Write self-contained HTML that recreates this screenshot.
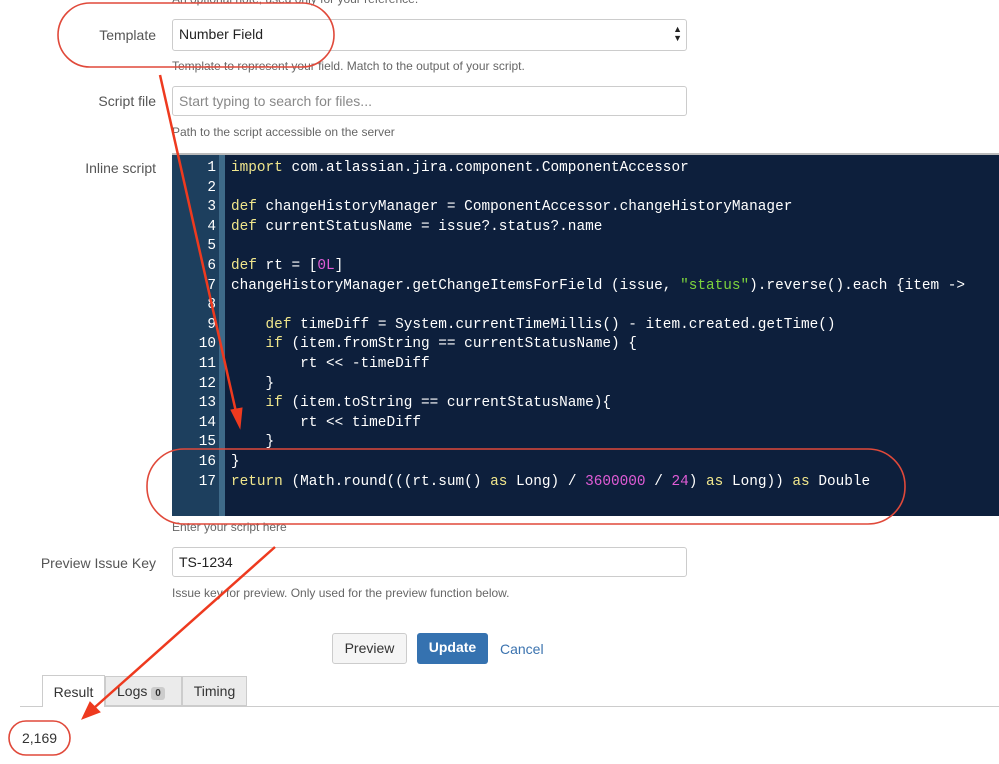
<!DOCTYPE html>
<html><head><style>
body{margin:0;width:999px;height:764px;overflow:hidden;background:#fff;font-family:"Liberation Sans",sans-serif;position:relative;color:#333}
.a{position:absolute}
.lbl{font-size:14px;color:#555;text-align:right;width:156px;left:0}
.inp{position:absolute;left:172px;width:515px;height:30px;border:1px solid #ccc;border-radius:3px;box-sizing:border-box;font-size:14px;padding:6px 6px;}
.help{position:absolute;left:172px;font-size:12px;color:#666}
.code{position:absolute;left:172px;top:153px;width:827px;height:363px;background:#0d1f3c;border-top:2px solid #bbb;box-sizing:border-box}
.gut{position:absolute;left:0;top:0;width:47px;height:100%;background:#1d3f5e}
.strip{position:absolute;left:47px;top:0;width:6px;height:100%;background:#3e6a89}
pre{margin:0;font-family:"Liberation Mono",monospace;font-size:14.4px;line-height:19.6px;position:absolute;top:4px}
.ln{left:0;width:44px;text-align:right;color:#fff}
.src{left:59px;color:#fff}
.k{color:#f0e68c}.n{color:#e05cd6}.s{color:#7cd33c}
.btn{position:absolute;top:633px;height:31px;border-radius:3px;font-size:14px;box-sizing:border-box;text-align:center;line-height:29px}
</style></head><body>
<div class="help" style="top:-8px">An optional note, used only for your reference.</div>
<div class="a lbl" style="top:27px">Template</div>
<div class="inp" style="top:19px;height:32px;background:#fff;color:#222">Number Field<span style="position:absolute;right:4px;top:5px;font-size:9px;line-height:9px">▲<br>▼</span></div>
<div class="help" style="top:59px">Template to represent your field. Match to the output of your script.</div>
<div class="a lbl" style="top:93px">Script file</div>
<div class="inp" style="top:86px;color:#888">Start typing to search for files...</div>
<div class="help" style="top:125px">Path to the script accessible on the server</div>
<div class="a lbl" style="top:160px">Inline script</div>
<div class="code"><div class="gut"></div><div class="strip"></div>
<pre class="ln">1
2
3
4
5
6
7
8
9
10
11
12
13
14
15
16
17</pre>
<pre class="src"><span class="k">import</span> com.atlassian.jira.component.ComponentAccessor

<span class="k">def</span> changeHistoryManager = ComponentAccessor.changeHistoryManager
<span class="k">def</span> currentStatusName = issue?.status?.name

<span class="k">def</span> rt = [<span class="n">0L</span>]
changeHistoryManager.getChangeItemsForField (issue, <span class="s">"status"</span>).reverse().each {item -&gt;

    <span class="k">def</span> timeDiff = System.currentTimeMillis() - item.created.getTime()
    <span class="k">if</span> (item.fromString == currentStatusName) {
        rt &lt;&lt; -timeDiff
    }
    <span class="k">if</span> (item.toString == currentStatusName){
        rt &lt;&lt; timeDiff
    }
}
<span class="k">return</span> (Math.round(((rt.sum() <span class="k">as</span> Long) / <span class="n">3600000</span> / <span class="n">24</span>) <span class="k">as</span> Long)) <span class="k">as</span> Double</pre>
</div>
<div class="help" style="top:520px">Enter your script here</div>
<div class="a lbl" style="top:555px">Preview Issue Key</div>
<div class="inp" style="top:547px;color:#222">TS-1234</div>
<div class="help" style="top:586px">Issue key for preview. Only used for the preview function below.</div>
<div class="btn" style="left:332px;width:75px;background:#f5f5f5;border:1px solid #ccc;color:#333">Preview</div>
<div class="btn" style="left:417px;width:71px;background:#3572b0;color:#fff;font-weight:bold">Update</div>
<div class="a" style="left:500px;top:641px;font-size:14px;color:#3b73af">Cancel</div>
<div class="a" style="left:20px;top:706px;width:979px;height:1px;background:#ccc"></div>
<div class="a" style="left:42px;top:675px;width:63px;height:32px;border:1px solid #ccc;border-bottom:none;background:#fff;box-sizing:border-box;font-size:14px;text-align:center;line-height:32px">Result</div>
<div class="a" style="left:105px;top:676px;width:77px;height:30px;border:1px solid #ccc;background:#ebebeb;box-sizing:border-box;font-size:14px;line-height:29px;padding-left:11px">Logs <span style="background:#ccc;font-size:10px;font-weight:bold;padding:1px 4px;border-radius:3px">0</span></div>
<div class="a" style="left:182px;top:676px;width:65px;height:30px;border:1px solid #ccc;background:#ebebeb;box-sizing:border-box;font-size:14px;text-align:center;line-height:29px">Timing</div>
<div class="a" style="left:22px;top:730px;font-size:14px">2,169</div>
<svg class="a" style="left:0;top:0" width="999" height="764">
<g fill="none" stroke="#e0493a" stroke-width="1.6">
<rect x="58" y="3" width="276" height="64" rx="32"/>
<rect x="147" y="449" width="758" height="75" rx="37"/>
<rect x="9" y="721" width="61" height="34" rx="17"/>
</g>
<g stroke="#ee3a1f" stroke-width="2.5" fill="#ee3a1f">
<line x1="160" y1="75" x2="236" y2="412"/>
<polygon points="240,428 231,410 242,408" stroke-width="1"/>
<line x1="275" y1="547" x2="94" y2="708"/>
<polygon points="82,719 90,702 100,712" stroke-width="1"/>
</g>
</svg>
</body></html>
